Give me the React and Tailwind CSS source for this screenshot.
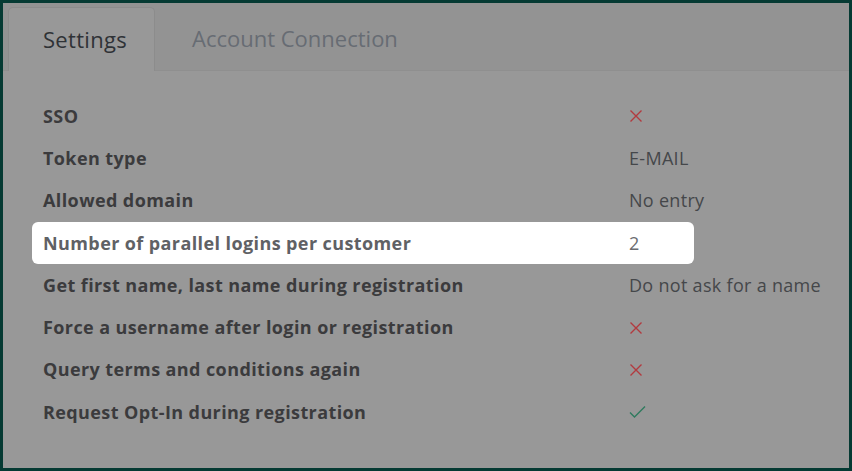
import React from "react";

const Cross = () => (
  <svg width="14" height="14" viewBox="0 0 14 14" className="block">
    <path d="M1.5 1.5 L12.5 12.5 M12.5 1.5 L1.5 12.5" stroke="#b23a3f" strokeWidth="1.4" fill="none" />
  </svg>
);
const Check = () => (
  <svg width="17" height="14" viewBox="0 0 17 14" className="block">
    <path d="M1 7.5 L5.5 12 L16 1.5" stroke="#2f7a5e" strokeWidth="1.4" fill="none" />
  </svg>
);

const rows = [
  ["SSO", <Cross />],
  ["Token type", "E-MAIL"],
  ["Allowed domain", "No entry"],
  ["Number of parallel logins per customer", "2", true],
  ["Get first name, last name during registration", "Do not ask for a name"],
  ["Force a username after login or registration", <Cross />],
  ["Query terms and conditions again", <Cross />],
  ["Request Opt-In during registration", <Check />],
];

export default function App() {
  return (
    <div
      className="w-[852px] h-[471px] bg-[#053a33] p-[3px]"
      style={{ fontFamily: '"Open Sans", "Noto Sans", sans-serif' }}
    >
      <div className="h-full w-full bg-[#989898] flex flex-col">
        <div className="h-[68px] bg-[#939393] border-b border-[#8f8f8f] flex items-end pl-[5px] shrink-0">
          <div className="h-[64px] w-[147px] -mb-px bg-[#989898] border border-b-0 border-[#8c8c8c] rounded-t-[5px] flex items-center pl-[34px]">
            <span className="text-[22px] text-[#2f3236] tracking-[0.3px]">Settings</span>
          </div>
          <div className="h-[64px] flex items-center pl-[37px]">
            <span className="text-[22px] text-[#676c73]">Account Connection</span>
          </div>
        </div>
        <div className="pt-[24px] pl-[29px] flex flex-col">
          {rows.map(([label, value, hl], i) => (
            <div
              key={i}
              className={
                "w-[662px] h-[42.3px] flex items-center pl-[11px] rounded-[6px] " +
                (hl ? "bg-white" : "")
              }
            >
              <div
                className={
                  "w-[586px] shrink-0 text-[18px] font-bold whitespace-nowrap tracking-[0.4px] " +
                  (hl ? "text-[#5f6165]" : "text-[#3b3b3d]")
                }
              >
                {label}
              </div>
              <div
                className={
                  "whitespace-nowrap text-[18px] tracking-[0.3px] " +
                  (hl ? "text-[#6a6c70]" : "text-[#45474a]")
                }
              >
                {value}
              </div>
            </div>
          ))}
        </div>
      </div>
    </div>
  );
}
